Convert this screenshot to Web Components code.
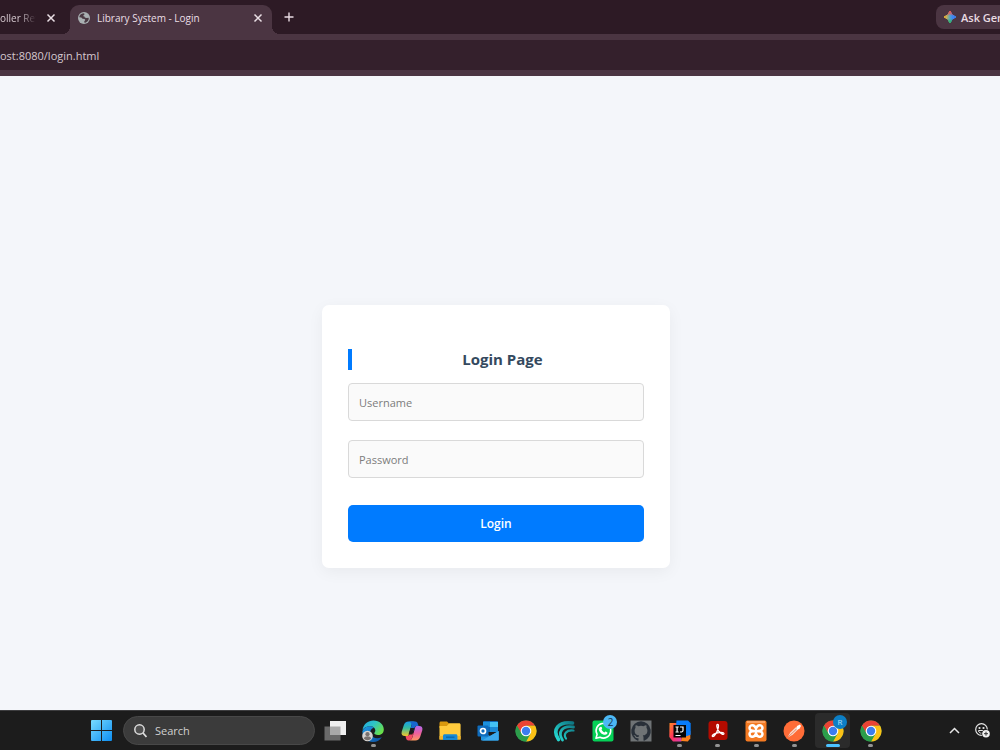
<!DOCTYPE html>
<html lang="en">
<head>
<meta charset="utf-8">
<meta name="viewport" content="width=device-width, initial-scale=1">
<title>Library System - Login</title>
<style>
  html, body {
    height: 100%;
    margin: 0;
  }

  body {
    font-family: "Open Sans", "Noto Sans", sans-serif;
    font-size: 11px;
    overflow: hidden;
  }
</style>
</head>
<body>
<desktop-screen>
  <browser-bar slot="top" url="ost:8080/login.html">
    <browser-tab label="oller Rev" cut></browser-tab>
    <browser-tab label="Library System - Login" active></browser-tab>
  </browser-bar>
  <login-card heading="Login Page">
    <text-field name="username" label="Username"></text-field>
    <text-field name="password" label="Password" type="password"></text-field>
  </login-card>
  <task-bar slot="bottom">
    <task-icon name="taskview" label="Task view"></task-icon>
    <task-icon name="edge" label="Edge" running></task-icon>
    <task-icon name="copilot" label="Copilot"></task-icon>
    <task-icon name="folder" label="File Explorer"></task-icon>
    <task-icon name="outlook" label="Outlook"></task-icon>
    <task-icon name="chrome" label="Chrome"></task-icon>
    <task-icon name="shell" label="Wave"></task-icon>
    <task-icon name="whatsapp" label="WhatsApp" badge="2"></task-icon>
    <task-icon name="github" label="GitHub"></task-icon>
    <task-icon name="intellij" label="IntelliJ IDEA" running></task-icon>
    <task-icon name="acrobat" label="Acrobat" running></task-icon>
    <task-icon name="xampp" label="XAMPP" running></task-icon>
    <task-icon name="postman" label="Postman" running></task-icon>
    <task-icon name="chrome" label="Chrome profile" badge="R" running current></task-icon>
    <task-icon name="chrome" label="Chrome" running></task-icon>
  </task-bar>
</desktop-screen>

<script>
const ICONS = {
  taskview: `
    <rect x="1.500" y="7.500" width="16" height="14" fill="#696969"/>
    <rect x="7" y="2" width="16" height="14" fill="#efefef"/>
    <path d="M7 7.500h10.500V16H7z" fill="#a9a9a9"/>`,
  edge: `
    <defs>
      <linearGradient id="a" x1="0" y1="0" x2="1" y2=".6"><stop stop-color="#1fa6e8"/><stop offset=".5" stop-color="#2fc5c5"/><stop offset="1" stop-color="#69e04b"/></linearGradient>
      <linearGradient id="b" x1="0" y1="0" x2="1" y2="1"><stop stop-color="#1d9be6"/><stop offset="1" stop-color="#0c4fa0"/></linearGradient>
    </defs>
    <path d="M1.500 11C2.500 5 7 1.500 12.500 1.500 18.500 1.500 22.800 5.500 22.800 10.500c0 3.800-2.800 5.500-5.800 5.500-2.500 0-4-.8-3.700-1.900.4-.8 1.200-1.400 1-3C14 8.800 12 7.300 9.300 7.300 5.500 7.300 3 9 1.500 11z" fill="url(#a)"/>
    <path d="M1.400 12C2.600 9 5.500 7.300 8.800 7.300c2 0 3.300.7 4.300 1.500C10 9.500 8.800 12 9.500 14.500c.8 3.300 4 5 7.200 4.800 1.900-.1 3.400-.8 4.300-1.300-1.800 3-5 5-9 5C6 23 1 18.500 1.400 12z" fill="url(#b)"/>
    <circle cx="6.500" cy="17" r="5.300" fill="#d5d2d0"/>
    <circle cx="6.500" cy="15.200" r="2.100" fill="#77716f"/>
    <path d="M2.900 19.500c.5-3 6.700-3 7.200 0-1.500 2.200-5.700 2.200-7.200 0z" fill="#77716f"/>`,
  copilot: `
    <defs>
      <linearGradient id="a" x1="0" y1="0" x2="0" y2="1"><stop stop-color="#189de9"/><stop offset=".45" stop-color="#35bd9d"/><stop offset="1" stop-color="#f5c52b"/></linearGradient>
      <linearGradient id="b" x1="0" y1="0" x2="0" y2="1"><stop stop-color="#b269ed"/><stop offset=".5" stop-color="#ec5f9d"/><stop offset="1" stop-color="#ff9760"/></linearGradient>
    </defs>
    <path d="M16.500 7H19c2.700 0 4 1.500 3.300 4.300l-2 6.200c-.8 2.500-2.400 4-5 4H8.600c2.400 0 3.300-1.400 4-3.700l2-7.200c.4-1.700.7-3.600 1.900-3.600z" fill="url(#b)"/>
    <path d="M7.500 17H5c-2.700 0-4-1.500-3.300-4.300l2-6.200c.8-2.500 2.400-4 5-4h6.700c-2.400 0-3.300 1.400-4 3.700l-2 7.200C9 15.100 8.700 17 7.500 17z" fill="url(#a)"/>
    <path d="M8.700 2.500h6.500c1.700 0 2.400 1.300 2.800 2.700l.6 1.800h-2.100c-1.200 0-1.800 1.200-2.200 2.500L13.700 12h-3.500l1.200-5.500c.4-1.800-.5-3.500-2.700-4z" fill="#1767ce"/>
    <path d="M7.500 17c1.200 0 1.700-1.200 2.200-3h3.800l-1 3.700c-.7 2.400-1.500 3.800-3.900 3.800-1.700 0-2.300-1.200-2.700-2.700L5.500 17z" fill="#f34b63"/>
    <path d="M10.500 9h4l-2 6.500h-4z" fill="#1c1c1c"/>`,
  folder: `
    <path d="M1.500 4c0-1 .6-1.600 1.500-1.600h6l2.500 2.500v4h-10z" fill="#d9990e"/>
    <path d="M1.500 7h7.300l2.500-2.700H21c1 0 1.600.6 1.600 1.500v14.700H1.500z" fill="#ffcb3d"/>
    <path d="M1.500 17h21.100v3.500H1.500z" fill="#f4b52b"/>
    <path d="M5 21v-4.200c0-1 .7-1.600 1.600-1.600h11.200c1 0 1.600.6 1.600 1.600V21z" fill="#1689d5"/>
    <path d="M8 18.200h8.500" stroke="#0868ad" stroke-width="1.400"/>`,
  outlook: `
    <rect x="7" y="2" width="15" height="11" rx="1" fill="#1066b5"/>
    <path d="M7 3h7v5H7z" fill="#1d91dc"/><path d="M14 3h8v5h-8z" fill="#43c1f5"/>
    <path d="M14 8h8v5h-8z" fill="#1b89d6"/>
    <path d="M5 12l9 5 8.700-5v8.500c0 .6-.4 1-1 1H6c-.6 0-1-.4-1-1z" fill="#2294df"/>
    <path d="M6 21.500L22.700 12v8.500c0 .6-.4 1-1 1z" fill="#3ba9ee"/>
    <rect x="1.500" y="6.500" width="11" height="11" rx="1" fill="#0f6cbd"/>
    <circle cx="7" cy="12" r="2.500" fill="none" stroke="#fff" stroke-width="1.700"/>`,
  chrome: `
    <circle cx="12" cy="12" r="10.500" fill="#34a853"/>
    <path d="M12 12L2.900 6.750A10.500 10.500 0 0 1 21.100 6.750H12z" fill="#ea4335"/>
    <path d="M2.900 6.750L7.500 14.600 12 12 12 6.750z" fill="#ea4335"/>
    <path d="M21.100 6.750A10.500 10.500 0 0 1 12 22.500L16.550 14.600 12 6.750z" fill="#fbc116"/>
    <path d="M2.900 6.750A10.500 10.500 0 0 0 12 22.500L16.550 14.600 12 12 7.450 14.600z" fill="#2c9d4b"/>
    <circle cx="12" cy="12" r="5.300" fill="#fff"/>
    <circle cx="12" cy="12" r="4.200" fill="#3c7df0"/>`,
  shell: `
    <defs><linearGradient id="a" gradientUnits="userSpaceOnUse" x1="4" y1="20" x2="21" y2="4"><stop stop-color="#25d7d0"/><stop offset="1" stop-color="#0e7482"/></linearGradient></defs>
    <g fill="none" stroke="url(#a)" stroke-linecap="round">
      <path d="M5.500 20.500C-1 11 5 2 19.500 4" stroke-width="3.600"/>
      <path d="M9.500 21C4.500 13.500 9 6 20.500 8" stroke-width="2.800"/>
      <path d="M13 19.500c-3-4.500.5-9 7.500-8" stroke-width="2.200"/>
    </g>`,
  whatsapp: `
    <rect x="1.500" y="1.500" width="21" height="21" rx="2" fill="#05d157"/>
    <path d="M5 19.300l1.100-3.900A7.300 7.300 0 1 1 9 18.200z" fill="none" stroke="#fff" stroke-width="1.600" stroke-linejoin="round"/>
    <path d="M9.300 8c.8-.7 1.300-.3 1.700.8.300.8.100 1-.5 1.700.7 1.400 1.600 2.300 3 2.900.8-.9 1-1.100 1.700-.7 1.300.6 1.600.9 1 2-.8 1.300-2.500 1.500-4.500.5-2-.9-3.400-2.700-3.900-4.500-.3-1.300.3-2 1.500-2.700z" fill="#fff"/>`,
  github: `
    <rect x="1.500" y="1.500" width="21" height="21" fill="#6f7375"/>
    <path d="M12 2.300a10 10 0 0 0-3.200 19.400c.5.100.7-.2.700-.5v-2c-2.800.6-3.400-1.200-3.400-1.200-.5-1.200-1.100-1.500-1.100-1.500-.9-.6.100-.6.100-.6 1 .1 1.600 1 1.600 1 .9 1.500 2.400 1.100 2.900.9.100-.7.400-1.100.6-1.300-2.200-.3-4.600-1.100-4.600-5 0-1.100.4-2 1-2.700-.1-.2-.4-1.300.1-2.600 0 0 .9-.3 2.800 1a9.700 9.700 0 0 1 5 0c1.900-1.300 2.800-1 2.800-1 .5 1.300.2 2.400.1 2.600.6.700 1 1.600 1 2.700 0 3.900-2.400 4.700-4.600 5 .4.300.7.900.7 1.800v2.900c0 .3.200.6.700.5A10 10 0 0 0 12 2.300z" fill="#293039"/>`,
  intellij: `
    <defs><linearGradient id="a" x1="0" y1="0" x2="1" y2="1"><stop stop-color="#ff8b21"/><stop offset=".5" stop-color="#fe315d"/><stop offset="1" stop-color="#d641b5"/></linearGradient></defs>
    <path d="M1.500 4h12v18.500H5L1.300 18z" fill="url(#a)"/>
    <path d="M15 12h7.300v7.500l-2.500 3L13 22z" fill="#fc801d"/>
    <path d="M8.500 1.500H20l2.700 2.800v11.500L16 18 8 9z" fill="#087cfa"/>
    <path d="M5.500 6H18v12.500H5.500z" fill="#050505"/>
    <path d="M7.500 8h3.200M9.100 8v5M7.500 13h3.200M12 8h3v3.500c0 1.200-1.500 1.900-3 1.200M7.500 16.500h5" fill="none" stroke="#fff" stroke-width="1.200"/>`,
  acrobat: `
    <rect x="2.500" y="2" width="19" height="19" rx="3" fill="#b30b00"/>
    <path d="M11.600 5.300c1.600 0 .8 4.300-.8 7.700-1.200 2.600-3.500 5.300-4.400 4.300-1.100-1.200 3-3.200 6.600-3.700 3.100-.4 5.200.2 4.900 1.200-.5 1.500-3.400-.4-5.200-2.700-1.600-2.100-2.700-6.800-1.100-6.800z" fill="none" stroke="#fff" stroke-width="1.300"/>`,
  xampp: `
    <rect x="1.500" y="1.500" width="21" height="21" rx="2" fill="#f47a22"/>
    <path d="M3 3h18" stroke="#ffb078" stroke-width="1.500"/>
    <path d="M12 9.500C9.500 3.500 4 7 6 10.500c.8 1 2 1.500 6 1.500s5.200-.5 6-1.500C20 7 14.500 3.500 12 9.500zM12 14.500C9.500 20.500 4 17 6 13.500c.8-1 2-1.500 6-1.500s5.200.5 6 1.500c2 3.500-3.500 7-6 1z" fill="none" stroke="#fff" stroke-width="2.500"/>`,
  postman: `
    <circle cx="12" cy="12" r="10.500" fill="#ff6c37"/>
    <path d="M5.300 18.700l3-5.300 5.500-5.100 2.200 2.200-5.300 5.300z" fill="#f8dcd0"/>
    <path d="M14 9.500l1-2.500 3-1.500 1 1.500-1.500 2.700-2.200 1z" fill="#fff"/>
    <path d="M5.500 18.500l9-8.500" stroke="#df7147" stroke-width=".8"/>`
}

class DesktopScreen extends HTMLElement {
  constructor() {
    super()
    this.attachShadow({ mode: 'open' })
    this.shadowRoot.innerHTML = `
      <style>
        :host {
          display: flex;
          flex-direction: column;
          min-height: 100vh;
        }

        main {
          flex: 1;
          display: flex;
          align-items: center;
          justify-content: center;
          padding: 86px 8px 0 0;
          background: #f4f6fa;
        }
      </style>
      <slot name="top"></slot>
      <main><slot></slot></main>
      <slot name="bottom"></slot>
    `
  }
}

class BrowserBar extends HTMLElement {
  constructor() {
    super()
    this.attachShadow({ mode: 'open' })
    this.shadowRoot.innerHTML = `
      <style>
        :host {
          display: block;
          overflow: hidden;
          color: #e9dce3;
          background: #4b3542;
        }

        .strip {
          display: flex;
          align-items: flex-end;
          height: 34px;
          background: #2d1a25;
        }

        button {
          display: flex;
          align-items: center;
          padding: 0;
          border: 0;
          background: none;
          color: inherit;
          font: inherit;
        }

        .add {
          align-self: center;
          margin-left: 12px;
        }

        /* runs on past the right edge of the window */
        .ask {
          flex: none;
          box-sizing: border-box;
          align-self: center;
          gap: 4px;
          width: 76px;
          height: 24px;
          margin: 0 -12px 0 auto;
          padding-left: 7px;
          border-radius: 8px;
          background: #4b3542;
          font-weight: 600;
          white-space: nowrap;
        }

        .ask svg {
          flex: none;
        }

        input {
          display: block;
          box-sizing: border-box;
          width: 100%;
          height: 30px;
          margin: 6px 0;
          padding: 0;
          border: 0;
          outline: 0;
          background: #34202c;
          color: #d5c8cf;
          font: inherit;
        }
      </style>
      <div class="strip">
        <slot></slot>
        <button class="add" aria-label="New tab">
          <svg width="10" height="10" viewBox="0 0 10 10"><path d="M5 .5v9M.5 5h9" stroke="#e9dce3" stroke-width="1.400"/></svg>
        </button>
        <button class="ask">
          <svg width="14" height="14" viewBox="0 0 14 14">
            <defs>
              <linearGradient id="g" x1="0" y1="0" x2="1" y2="0"><stop offset=".1" stop-color="#efb632"/><stop offset=".5" stop-color="#4fa3c9"/><stop offset=".7" stop-color="#3c86f6"/></linearGradient>
              <linearGradient id="v" x1="0" y1="0" x2="0" y2="1"><stop offset=".1" stop-color="#f0524a"/><stop offset=".4" stop-color="#f0524a" stop-opacity="0"/><stop offset=".65" stop-color="#32b46a" stop-opacity="0"/><stop offset=".9" stop-color="#32b46a"/></linearGradient>
            </defs>
            <path d="M7 1Q8.500 5.500 13 7 8.500 8.500 7 13 5.500 8.500 1 7 5.500 5.500 7 1z" fill="url(#g)" stroke="url(#g)"/>
            <path d="M7 1Q8.500 5.500 13 7 8.500 8.500 7 13 5.500 8.500 1 7 5.500 5.500 7 1z" fill="url(#v)" stroke="url(#v)"/>
          </svg>
          Ask Gem
        </button>
      </div>
      <input type="text" aria-label="Address" value="${this.getAttribute('url')}">
    `
  }
}

class BrowserTab extends HTMLElement {
  constructor() {
    super()
    this.attachShadow({ mode: 'open' })
    this.shadowRoot.innerHTML = `
      <style>
        :host {
          display: flex;
          align-items: center;
          box-sizing: border-box;
          flex: none;
          height: 29px;
          padding-bottom: 4px;
          font-size: 10px;
          color: #d6c9d0;
        }

        :host([cut]) {
          width: 70px;
          padding-right: 14px;
        }

        :host([cut]) .label {
          -webkit-mask-image: linear-gradient(to right, #000 50%, transparent 90%);
          mask-image: linear-gradient(to right, #000 50%, transparent 90%);
        }

        :host([active]) {
          position: relative;
          width: 202px;
          padding: 0 9px 4px 8px;
          border-radius: 9px 9px 0 0;
          background: #4b3542;
          color: #eadfe5;
        }

        /* flared feet of the open tab */
        :host([active])::before,
        :host([active])::after {
          content: "";
          position: absolute;
          bottom: 0;
          width: 8px;
          height: 8px;
        }

        :host([active])::before {
          right: 100%;
          background: radial-gradient(circle at 0 0, transparent 8px, #4b3542 8px);
        }

        :host([active])::after {
          left: 100%;
          background: radial-gradient(circle at 100% 0, transparent 8px, #4b3542 8px);
        }

        .globe {
          flex: none;
          margin-right: 7px;
        }

        :host([cut]) .globe {
          display: none;
        }

        .label {
          white-space: nowrap;
        }

        button {
          display: flex;
          margin-left: auto;
          padding: 0;
          border: 0;
          background: none;
        }
      </style>
      <svg class="globe" width="12" height="12" viewBox="0 0 12 12">
        <circle cx="6" cy="6" r="6" fill="#a9b0b2"/>
        <path d="M1.200 5.300C1.500 3 3 1.500 5.500 1.200L6.800 2 5.500 3.200 5.300 4.300 6.500 4.500 6.800 5.500 8.500 6l2.200-.3C11 8.500 9 10.500 6.500 10.800L6.200 9.500 7.300 8 6.500 7 4.500 6.800 3.300 5.500z" fill="#4b3a44"/>
      </svg>
      <span class="label">${this.getAttribute('label')}</span>
      <button aria-label="Close tab">
        <svg width="10" height="10" viewBox="0 0 10 10"><path d="M1.500 1.500l7 7M8.500 1.500l-7 7" stroke="#eadfe5" stroke-width="1.500"/></svg>
      </button>
    `
  }
}

class LoginCard extends HTMLElement {
  constructor() {
    super()
    this.attachShadow({ mode: 'open' })
    this.shadowRoot.innerHTML = `
      <style>
        :host {
          display: block;
          box-sizing: border-box;
          width: 100%;
          max-width: 348px;
          padding: 44px 26px 26px;
          border-radius: 7px;
          background: #fff;
          box-shadow: 0 4px 16px rgba(0, 0, 0, 0.05);
        }

        h2 {
          margin: 0 0 13px;
          padding-left: 9px;
          border-left: 4px solid #007bff;
          color: #34495e;
          font-size: 15px;
          font-weight: 700;
          line-height: 21px;
          text-align: center;
        }

        form {
          display: flex;
          flex-direction: column;
          gap: 19px;
        }

        button {
          height: 37px;
          margin-top: 8px;
          padding: 1px 0 0;
          border: 0;
          border-radius: 5px;
          background: #007bff;
          color: #fff;
          font: inherit;
          font-size: 12px;
          font-weight: 600;
        }
      </style>
      <h2>${this.getAttribute('heading')}</h2>
      <form>
        <slot></slot>
        <button type="submit">Login</button>
      </form>
    `
  }

  connectedCallback() {
    this.shadowRoot.querySelector('form').addEventListener('submit', (e) => e.preventDefault())
  }
}

class TextField extends HTMLElement {
  constructor() {
    super()
    this.attachShadow({ mode: 'open' })
    const label = this.getAttribute('label')
    this.shadowRoot.innerHTML = `
      <style>
        :host {
          display: block;
        }

        input {
          display: block;
          box-sizing: border-box;
          width: 100%;
          height: 38px;
          padding: 1px 10px 0;
          border: 1px solid #d9d9d9;
          border-radius: 4px;
          background: #fafafa;
          color: #333;
          font: inherit;
        }

        input::placeholder {
          color: #7c7c7c;
        }
      </style>
      <input type="${this.getAttribute('type') || 'text'}" name="${this.getAttribute('name')}" placeholder="${label}" aria-label="${label}">
    `
  }
}

class TaskBar extends HTMLElement {
  constructor() {
    super()
    this.attachShadow({ mode: 'open' })
    this.shadowRoot.innerHTML = `
      <style>
        :host {
          display: flex;
          align-items: center;
          box-sizing: border-box;
          height: 40px;
          padding: 0 10px 0 91px;
          border-top: 1px solid #3d3d3f;
          background: #1c1c1c;
          color: #d0d0d0;
        }

        .start {
          display: flex;
          padding: 0;
          border: 0;
          background: none;
        }

        label {
          display: flex;
          align-items: center;
          box-sizing: border-box;
          width: 192px;
          height: 29px;
          margin-left: 11px;
          padding: 0 10px;
          gap: 8px;
          border: 1px solid #484848;
          border-radius: 15px;
          background: #3b3b3b;
        }

        input {
          flex: 1;
          min-width: 0;
          padding: 0;
          border: 0;
          outline: 0;
          background: none;
          color: inherit;
          font: inherit;
        }

        input::placeholder {
          color: #d0d0d0;
        }

        .apps {
          display: grid;
          grid-template-columns: repeat(15, 1fr);
          flex: 0 1 574px;
          margin-left: 1px;
        }

        .tray {
          display: flex;
          align-items: center;
          gap: 15px;
          margin-left: auto;
        }
      </style>
      <button class="start" aria-label="Start">
        <svg width="21" height="21" viewBox="0 0 21 21">
          <defs><linearGradient id="w" x1="0" y1="0" x2="1" y2="1"><stop stop-color="#79dcff"/><stop offset="1" stop-color="#0d8df0"/></linearGradient></defs>
          <path d="M0 1q0-1 1-1h9v10H0zM11 0h9q1 0 1 1v9H11zM0 11h10v10H1q-1 0-1-1zM11 11h10v9q0 1-1 1h-9z" fill="url(#w)"/>
        </svg>
      </button>
      <label>
        <svg width="13" height="14" viewBox="0 0 13 14"><circle cx="5.500" cy="5.500" r="4.700" fill="#505050" stroke="#ddd" stroke-width="1.500"/><path d="M9 9l3.500 4" stroke="#ddd" stroke-width="1.800"/></svg>
        <input type="search" placeholder="Search" aria-label="Search">
      </label>
      <div class="apps"><slot></slot></div>
      <div class="tray">
        <svg width="11" height="7" viewBox="0 0 11 7"><path d="M1 6l4.500-4.500L10 6" fill="none" stroke="#e6e6e6" stroke-width="1.500"/></svg>
        <svg width="15" height="15" viewBox="0 0 15 15">
          <circle cx="6.500" cy="6.500" r="5.800" fill="none" stroke="#e6e6e6" stroke-width="1.200"/>
          <circle cx="4.500" cy="5" r="1.100" fill="#e6e6e6"/><circle cx="8.500" cy="5" r="1.100" fill="#e6e6e6"/>
          <path d="M3.300 7.500h5.500M3.500 8c.5 1.600 1.700 2.300 3.200 2.200" fill="none" stroke="#e6e6e6"/>
          <circle cx="11" cy="10.700" r="4.500" fill="#1c1c1c"/><circle cx="11" cy="10.700" r="3.800" fill="#f2f2f2"/>
          <path d="M11 8.700v4M9 10.700h4" stroke="#333"/>
        </svg>
      </div>
    `
  }
}

class TaskIcon extends HTMLElement {
  constructor() {
    super()
    this.attachShadow({ mode: 'open' })
    const badge = this.getAttribute('badge')
    this.shadowRoot.innerHTML = `
      <style>
        :host {
          display: flex;
          justify-content: center;
        }

        button {
          position: relative;
          display: flex;
          align-items: center;
          justify-content: center;
          width: 35px;
          height: 35px;
          padding: 0;
          border: 0;
          border-radius: 4px;
          background: none;
          font: inherit;
        }

        :host([current]) button {
          background: #2b2b2b;
        }

        :host([running]) button::after {
          content: "";
          position: absolute;
          bottom: 1px;
          width: 5px;
          height: 3px;
          border-radius: 2px;
          background: #939393;
        }

        :host([current]) button::after {
          width: 14px;
          background: #4cc2ff;
        }

        .badge {
          position: absolute;
          top: 2px;
          right: 3px;
          width: 14px;
          height: 14px;
          border-radius: 50%;
          background: #4cb8f5;
          color: #17324a;
          font-size: 10px;
          line-height: 14px;
          text-align: center;
        }

        :host([current]) .badge {
          background: #0c7fc6;
          color: #b9e2fa;
          font-size: 8px;
        }
      </style>
      <button aria-label="${this.getAttribute('label')}">
        <svg width="24" height="24" viewBox="0 0 24 24">${ICONS[this.getAttribute('name')]}</svg>
        ${badge ? `<span class="badge">${badge}</span>` : ''}
      </button>
    `
  }
}

customElements.define('desktop-screen', DesktopScreen)
customElements.define('browser-bar', BrowserBar)
customElements.define('browser-tab', BrowserTab)
customElements.define('login-card', LoginCard)
customElements.define('text-field', TextField)
customElements.define('task-bar', TaskBar)
customElements.define('task-icon', TaskIcon)
</script>
</body>
</html>
